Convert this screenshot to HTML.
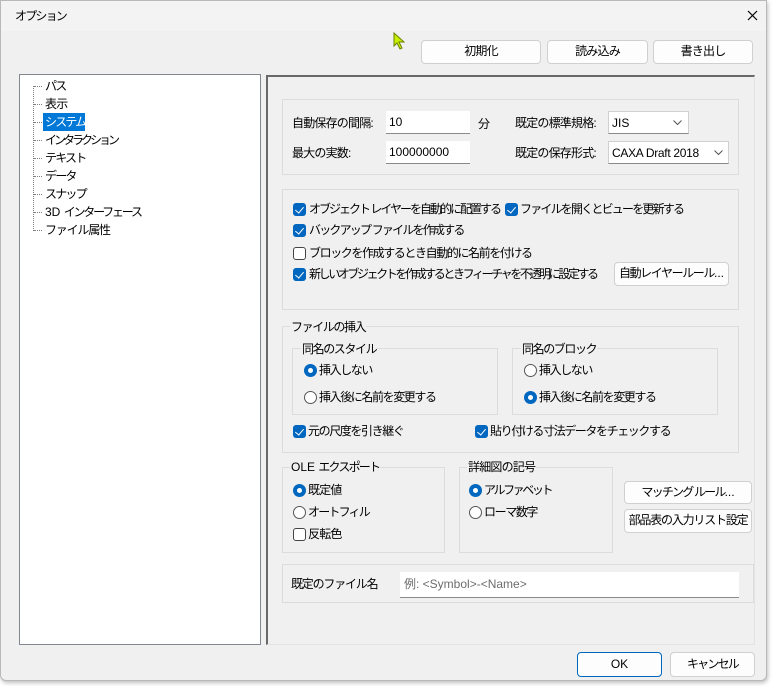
<!DOCTYPE html>
<html><head><meta charset="utf-8"><style>
*{box-sizing:border-box;margin:0;padding:0}
body{width:773px;height:686px;background:#fff;font-family:"Liberation Sans","Noto Sans CJK JP",sans-serif;font-size:12px;color:#000;position:relative;overflow:hidden;letter-spacing:-1.8px}
.L{letter-spacing:0}
.K{letter-spacing:-0.8px}
.M{letter-spacing:-1.4px}
.win{position:absolute;left:0;top:0;width:767px;height:681px;background:#f0f0f0;border:1px solid #b8b8b8;border-radius:0 0 6px 6px;box-shadow:1px 2px 4px rgba(0,0,0,.25)}
.a{position:absolute;white-space:nowrap;line-height:16px}
.btn{position:absolute;background:#fdfdfd;border:1px solid #d0d0d0;border-radius:4px;text-align:center;line-height:20px;white-space:nowrap}
.grp{position:absolute;border:1px solid #dcdcdc}
.lg{position:absolute;background:#f0f0f0;padding:0 1px;line-height:14px;white-space:nowrap}
.inp{position:absolute;background:#fff;border-bottom:1px solid #8a8a8a;line-height:22px;padding-left:3px;letter-spacing:0}
.cb{position:absolute;width:13px;height:13px;border-radius:3px;background:#0067c0}
.cb::after{content:"";position:absolute;left:4px;top:2px;width:4px;height:7px;border:solid #fff;border-width:0 1.5px 1.5px 0;transform:rotate(40deg)}
.cbo{position:absolute;width:13px;height:13px;border-radius:3px;border:1px solid #444;background:#fff}
.rd{position:absolute;width:13px;height:13px;border-radius:50%;background:#0067c0}
.rd::after{content:"";position:absolute;left:4px;top:4px;width:5px;height:5px;border-radius:50%;background:#fff}
.rdo{position:absolute;width:13px;height:13px;border-radius:50%;border:1px solid #555;background:#fff}
.dot{position:absolute;border-top:1px dotted #808080;width:8px}
</style></head><body>
<div class="win">
<div style="position:absolute;left:0;top:0;width:765px;height:30px;background:#f3f3f3"></div>
<div class="a" style="left:14px;top:7px">オプション</div>
<svg style="position:absolute;left:746px;top:9px" width="11" height="11"><path d="M1 1L10 10M10 1L1 10" stroke="#000" stroke-width="1.2"/></svg>
<svg style="position:absolute;left:392px;top:31px" width="12" height="18"><path d="M1 1 L1 14 L4 11 L7 17 L9 16 L6 10 L11 10 Z" fill="#c6f000" stroke="#6a8000" stroke-width="1"/></svg>
<div class="btn K" style="left:420px;top:39px;width:120px;height:24px">初期化</div>
<div class="btn K" style="left:546px;top:39px;width:101px;height:24px">読み込み</div>
<div class="btn K" style="left:652px;top:39px;width:100px;height:24px">書き出し</div>

<div style="position:absolute;left:18px;top:73px;width:242px;height:571px;background:#fff;border:1px solid #828790"></div>
<div style="position:absolute;left:32px;top:85px;height:145px;border-left:1px dotted #808080"></div>
<div class="dot" style="left:33px;top:85px"></div><div class="a" style="left:44px;top:77px">パス</div>
<div class="dot" style="left:33px;top:103px"></div><div class="a K" style="left:44px;top:95px">表示</div>
<div class="dot" style="left:33px;top:121px"></div><div class="a" style="left:42px;top:112px;background:#0078d7;color:#fff;padding:1px 2px;width:42px">システム</div>
<div class="dot" style="left:33px;top:139px"></div><div class="a" style="left:44px;top:131px;letter-spacing:-3px">インタラクション</div>
<div class="dot" style="left:33px;top:157px"></div><div class="a" style="left:44px;top:149px">テキスト</div>
<div class="dot" style="left:33px;top:175px"></div><div class="a" style="left:44px;top:167px">データ</div>
<div class="dot" style="left:33px;top:193px"></div><div class="a" style="left:44px;top:185px">スナップ</div>
<div class="dot" style="left:33px;top:211px"></div><div class="a" style="left:44px;top:203px;letter-spacing:-2.2px"><span class="L">3D </span>インターフェース</div>
<div class="dot" style="left:33px;top:229px"></div><div class="a" style="left:44px;top:221px;letter-spacing:-1.2px">ファイル属性</div>

<div style="position:absolute;left:265px;top:74px;width:489px;height:570px;border-top:2px solid #696969;border-left:2px solid #696969;border-right:1px solid #e3e3e3;border-bottom:1px solid #e3e3e3"></div>

<div class="grp" style="left:281px;top:98px;width:457px;height:76px"></div>
<div class="a K" style="left:291px;top:114px">自動保存の間隔:</div>
<div class="inp" style="left:385px;top:110px;width:84px;height:23px">10</div>
<div class="a" style="left:477px;top:115px">分</div>
<div class="a K" style="left:514px;top:114px">既定の標準規格:</div>
<div class="inp" style="left:607px;top:110px;width:81px;height:23px;border:1px solid #d0d0d0;border-bottom-color:#8a8a8a">JIS</div>
<svg style="position:absolute;left:672px;top:119px" width="9" height="6"><path d="M0.5 0.5L4.5 4.5L8.5 0.5" stroke="#555" fill="none"/></svg>
<div class="a K" style="left:291px;top:144px">最大の実数:</div>
<div class="inp" style="left:385px;top:140px;width:84px;height:23px">100000000</div>
<div class="a K" style="left:514px;top:144px">既定の保存形式:</div>
<div class="inp" style="left:607px;top:140px;width:121px;height:23px;border:1px solid #d0d0d0;border-bottom-color:#8a8a8a;letter-spacing:-0.3px">CAXA Draft 2018</div>
<svg style="position:absolute;left:713px;top:149px" width="9" height="6"><path d="M0.5 0.5L4.5 4.5L8.5 0.5" stroke="#555" fill="none"/></svg>

<div class="grp" style="left:281px;top:188px;width:457px;height:121px"></div>
<div class="cb" style="left:292px;top:202px"></div><div class="a" style="left:308px;top:200px;letter-spacing:-2px">オブジェクト レイヤーを自動的に配置する</div>
<div class="cb" style="left:504px;top:202px"></div><div class="a" style="left:519px;top:200px">ファイルを開くとビューを更新する</div>
<div class="cb" style="left:292px;top:223px"></div><div class="a" style="left:308px;top:221px">バックアップ ファイルを作成する</div>
<div class="cbo" style="left:292px;top:246px"></div><div class="a M" style="left:308px;top:244px">ブロックを作成するとき自動的に名前を付ける</div>
<div class="cb" style="left:292px;top:267px"></div><div class="a" style="left:308px;top:265px;letter-spacing:-2.4px">新しいオブジェクトを作成するときフィーチャを不透明に設定する</div>
<div class="btn M" style="left:613px;top:261px;width:115px;height:24px">自動レイヤールール<span class="L">...</span></div>

<div class="grp" style="left:281px;top:325px;width:457px;height:127px"></div>
<div class="lg M" style="left:289px;top:319px">ファイルの挿入</div>
<div class="grp" style="left:291px;top:347px;width:206px;height:67px"></div>
<div class="lg M" style="left:300px;top:341px">同名のスタイル</div>
<div class="rd" style="left:303px;top:363px"></div><div class="a M" style="left:318px;top:361px">挿入しない</div>
<div class="rdo" style="left:303px;top:390px"></div><div class="a M" style="left:318px;top:388px">挿入後に名前を変更する</div>
<div class="grp" style="left:511px;top:347px;width:206px;height:67px"></div>
<div class="lg M" style="left:520px;top:341px">同名のブロック</div>
<div class="rdo" style="left:523px;top:363px"></div><div class="a M" style="left:538px;top:361px">挿入しない</div>
<div class="rd" style="left:523px;top:390px"></div><div class="a M" style="left:538px;top:388px">挿入後に名前を変更する</div>
<div class="cb" style="left:292px;top:424px"></div><div class="a M" style="left:307px;top:422px">元の尺度を引き継ぐ</div>
<div class="cb" style="left:474px;top:424px"></div><div class="a M" style="left:489px;top:422px">貼り付ける寸法データをチェックする</div>

<div class="grp" style="left:281px;top:466px;width:163px;height:86px"></div>
<div class="lg" style="left:289px;top:459px"><span class="L">OLE </span>エクスポート</div>
<div class="rd" style="left:292px;top:483px"></div><div class="a K" style="left:307px;top:481px">既定値</div>
<div class="rdo" style="left:292px;top:505px"></div><div class="a" style="left:307px;top:503px">オートフィル</div>
<div class="cbo" style="left:292px;top:527px"></div><div class="a K" style="left:307px;top:525px">反転色</div>
<div class="grp" style="left:458px;top:466px;width:154px;height:86px"></div>
<div class="lg K" style="left:466px;top:459px">詳細図の記号</div>
<div class="rd" style="left:468px;top:483px"></div><div class="a" style="left:483px;top:481px;letter-spacing:-2.4px">アルファベット</div>
<div class="rdo" style="left:468px;top:505px"></div><div class="a M" style="left:483px;top:503px">ローマ数字</div>
<div class="btn" style="left:623px;top:480px;width:128px;height:23px">マッチング ルール<span class="L">...</span></div>
<div class="btn K" style="left:623px;top:508px;width:128px;height:24px;letter-spacing:-1.2px">部品表の入力リスト設定</div>

<div class="grp" style="left:281px;top:563px;width:472px;height:39px"></div>
<div class="a" style="left:290px;top:575px;letter-spacing:-1.2px">既定のファイル名</div>
<div class="inp" style="left:399px;top:571px;width:339px;height:26px;color:#6d6d6d;line-height:24px;padding-left:4px">例: &lt;Symbol&gt;-&lt;Name&gt;</div>

<div class="btn L" style="left:576px;top:651px;width:85px;height:25px;border-color:#0067c0;line-height:23px">OK</div>
<div class="btn" style="left:669px;top:651px;width:85px;height:25px;line-height:23px">キャンセル</div>
</div>
</body></html>
